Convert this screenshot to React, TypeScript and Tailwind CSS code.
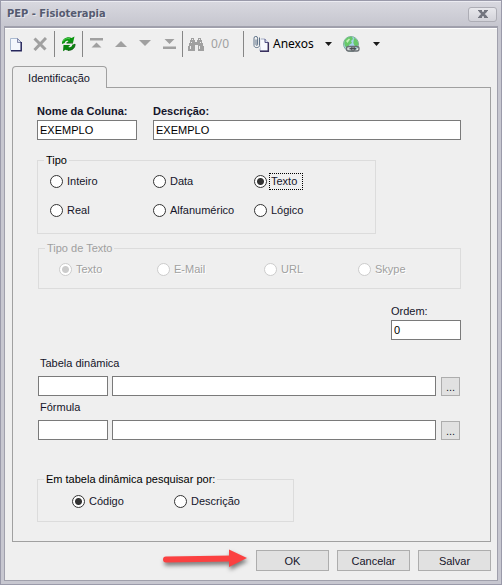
import type { ReactNode } from "react"

const fieldClass =
  "block h-5 w-full min-w-0 border border-[#7a7a7a] bg-white px-[2px] text-[11px] text-black outline-none"

const buttonClass = "border border-[#adadad] bg-[#e1e1e1] text-center text-[11px] text-[#15152a]"

const toolbarIcons = {
  page: (
    <svg width="13" height="15" viewBox="0 0 13 15">
      <path d="M1 1.5h7l3.5 3.5v8.5H1z" fill="#f3f7fd" />
      <path d="M.5 13.5v-12h7" fill="none" stroke="#a9b9d0" />
      <path d="M7.5 1.5v4h4z" fill="#d5deee" stroke="#6a7098" strokeWidth=".8" />
      <path d="M11.2 5v8.7H1" fill="none" stroke="#26265c" strokeWidth="1.5" />
    </svg>
  ),
  remove: (
    <svg width="14" height="14" viewBox="0 0 14 14">
      <path d="M1.5 1.5l11 11M13 1L1.500 13" fill="none" stroke="#a0a0a0" strokeWidth="3" />
    </svg>
  ),
  refresh: (
    <svg width="15" height="16" viewBox="0 0 15 16">
      <path d="M1 8C.8 3.500 4 1.200 8 1.200c1 0 1.700.2 2.500.8L13.500.5 12 6.800 5.500 7 7.500 5C5.500 4 3.800 5.200 3.800 7z" fill="#0a960f" />
      <path d="M14 7.800c.2 4.500-3 6.700-7 6.700-1 0-1.700-.2-2.500-.8L2 15.200 2.500 9h6.800L7.300 11c2 1 3.900-.2 3.900-2.200z" fill="#0a840f" />
      <path d="M2 5.500C3 3 6 2 9 2.800" fill="none" stroke="#4fd052" />
      <path d="M5.500 7H12M14 8c.2 4.200-3 6.400-7 6.400" fill="none" stroke="#07500a" strokeWidth=".9" />
    </svg>
  ),
  first: (
    <svg width="13" height="12" viewBox="0 0 13 12">
      <path d="M0 0h13v2.500H0zM6.500 4.500l5 5h-10z" fill="#a0a0a0" />
    </svg>
  ),
  previous: (
    <svg width="12" height="12" viewBox="0 0 12 12">
      <path d="M6 3l6 6H0z" fill="#a0a0a0" />
    </svg>
  ),
  next: (
    <svg width="12" height="12" viewBox="0 0 12 12">
      <path d="M0 2h12L6 8z" fill="#a0a0a0" />
    </svg>
  ),
  last: (
    <svg width="13" height="12" viewBox="0 0 13 12">
      <path d="M1.500 1h10l-5 5zM0 8.500h13V11H0z" fill="#a0a0a0" />
    </svg>
  ),
  search: (
    <svg width="16" height="14" viewBox="0 0 16 14">
      <path d="M3 1h3v2h1v2h2V3h1V1h3v2h1v3h1v3h1v5h-6V8H7v6H0V9h1V6h1V3h1z" fill="#a0a0a0" />
      <path d="M4 2h1v1H4zM11 2h1v1h-1zM3 5h1v1H3zM12 5h1v1h-1zM2 9h1v3H2zM11 9h1v3h-1z" fill="#ededed" />
    </svg>
  ),
  attachments: (
    <svg width="17" height="16" viewBox="0 0 17 16">
      <path d="M7 3h5l3.500 3.500V15H7z" fill="#f7f9fe" stroke="#a3acc4" />
      <path d="M12 3v3.500h3.500" fill="#d4dbec" stroke="#545384" />
      <path d="M15.300 6.500v8.700H7" fill="none" stroke="#39305e" strokeWidth="1.500" />
      <path d="M6.500 1.500v8c0 3.200-5.500 3.200-5.500 0V2a1.700 1.700 0 0 1 3.600 0V9" fill="none" stroke="#f3f3f3" strokeWidth="2.500" />
      <path d="M6.500 1.500v8c0 2.800-5.500 2.800-5.500 0V2.200a1.700 1.700 0 0 1 3.600 0V8.500a.8.8 0 0 1-1.600 0V3.500" fill="none" stroke="#5d7187" />
    </svg>
  ),
  globe: (
    <svg width="17" height="17" viewBox="0 0 17 17">
      <circle cx="8" cy="8" r="7.500" fill="#a5d3ec" stroke="#82b09c" />
      <path d="M2 4c2-3 5-3.500 7-3l1 2-2 2 1 2-3 2-1 4C1.500 11 .5 7 2 4zM11 2c3 1 4.500 4 4.300 7l-3 2-2-4z" fill="#68c96a" />
      <path d="M3 5l3-2.500 1 1L4.500 7z" fill="#c2f0b6" />
      <rect x="3.500" y="10.500" width="8" height="4.500" rx="2" fill="#d5d8db" stroke="#6b7075" strokeWidth="1.300" />
      <rect x="8.500" y="10.500" width="7.500" height="4.500" rx="2" fill="none" stroke="#6b7075" strokeWidth="1.300" />
      <path d="M6.500 12.700h6.500" stroke="#45494d" strokeWidth="1.300" />
    </svg>
  ),
  caret: (
    <svg width="7" height="4" viewBox="0 0 7 4">
      <path d="M0 0h7L3.500 4z" fill="#1a1a1a" />
    </svg>
  ),
}

function ToolButton({ label, className, children }: { label: string; className: string; children: ReactNode }) {
  return (
    <button type="button" aria-label={label} className={`flex shrink-0 items-center ${className}`}>
      {children}
    </button>
  )
}

function Separator() {
  return <div className="h-[26px] w-px shrink-0 bg-[#868686]" />
}

function Toolbar() {
  return (
    <div className="flex h-7 items-center pt-[2px] pl-[5px] font-['Noto_Sans',sans-serif] text-[12px]">
      <ToolButton label="Novo" className="w-[23px]">{toolbarIcons.page}</ToolButton>
      <ToolButton label="Excluir" className="w-[21px]">{toolbarIcons.remove}</ToolButton>
      <Separator />
      <ToolButton label="Atualizar" className="w-[27px] pl-[6px]">{toolbarIcons.refresh}</ToolButton>
      <Separator />
      <ToolButton label="Primeiro" className="w-8 pl-[7px]">{toolbarIcons.first}</ToolButton>
      <ToolButton label="Anterior" className="w-6">{toolbarIcons.previous}</ToolButton>
      <ToolButton label="Próximo" className="w-6">{toolbarIcons.next}</ToolButton>
      <ToolButton label="Último" className="w-[19px]">{toolbarIcons.last}</ToolButton>
      <Separator />
      <ToolButton label="Localizar" className="w-7 pl-[5px]">{toolbarIcons.search}</ToolButton>
      <span className="w-8 shrink-0 text-[#a0a0a0]">0/0</span>
      <Separator />
      <button type="button" className="flex shrink-0 items-center gap-[3px] pl-[9px] text-black">
        {toolbarIcons.attachments}
        Anexos
      </button>
      <ToolButton label="Opções de anexos" className="w-[29px] pl-[11px]">{toolbarIcons.caret}</ToolButton>
      <ToolButton label="Web" className="w-[30px]">{toolbarIcons.globe}</ToolButton>
      <ToolButton label="Opções da web" className="w-[9px]">{toolbarIcons.caret}</ToolButton>
    </div>
  )
}

type RadioProps = { name: string; label: string; checked?: boolean; disabled?: boolean; focused?: boolean }

function Radio({ name, label, checked, disabled, focused }: RadioProps) {
  return (
    <label className="flex h-[17px] items-center gap-[2px] whitespace-nowrap">
      <input
        type="radio"
        name={name}
        defaultChecked={checked}
        disabled={disabled}
        className="size-[13px] shrink-0 appearance-none rounded-full border border-[#333] bg-white text-[#333] checked:bg-[radial-gradient(circle,currentColor_3px,transparent_4px)] disabled:border-[#ccc] disabled:text-[#ccc]"
      />
      <span
        className={`border pl-px leading-[15px] ${focused ? "border-dotted border-black pr-[5px]" : "border-transparent pr-px"} ${
          disabled ? "text-[#a0a0a0] [text-shadow:1px_1px_0_#fff]" : ""
        }`}
      >
        {label}
      </span>
    </label>
  )
}

type GroupProps = { title: string; className: string; disabled?: boolean; children: ReactNode }

function Group({ title, className, disabled, children }: GroupProps) {
  return (
    <fieldset disabled={disabled} className={`min-w-0 border border-[#dcdcdc] ${className}`}>
      <legend className={`ml-[6px] px-[2px] leading-[14px] ${disabled ? "text-[#a0a0a0]" : "text-black"}`}>{title}</legend>
      {children}
    </fieldset>
  )
}

function LookupField({ id, label }: { id: string; label: string }) {
  return (
    <div className="pl-px">
      <label htmlFor={id} className="mb-[6px] block pl-[2px]">
        {label}
      </label>
      <div className="flex items-end">
        <div className="w-[70px] shrink-0">
          <input id={id} className={fieldClass} />
        </div>
        <div className="ml-1 flex-1">
          <input aria-label={label} className={fieldClass} />
        </div>
        <button type="button" className={`mr-px ml-[5px] h-[19px] w-[19px] ${buttonClass}`}>
          ...
        </button>
      </div>
    </div>
  )
}

export default function App() {
  return (
    <div className="flex min-h-screen flex-col border border-[#9a9aaa] bg-[#c7c7d0] font-['Liberation_Sans',Arial,sans-serif] text-[11px] leading-[14px] text-[#15152a]">
      <header className="flex h-[25px] shrink-0 items-center justify-between border-t border-[#ececf2] bg-linear-to-b from-[#d8d8df] to-[#c6c6cf] pr-1 pl-[6px]">
        <h1 className="font-['DejaVu_Sans_Condensed','Noto_Sans',sans-serif] text-[11px] font-bold text-[#555b70] [text-shadow:1px_1px_0_#e6e6ec]">
          PEP - Fisioterapia
        </h1>
        <button
          type="button"
          aria-label="Fechar"
          className="flex h-[15px] w-[29px] items-center justify-center rounded-[3px] border border-[#adadb5] bg-linear-to-b from-[#e8e8ec] to-[#d2d2d9]"
        >
          <svg width="10" height="8" viewBox="0 0 10 8">
            <path d="M0 .500h4M6 .500h4M0 7.500h4M6 7.500h4" stroke="#73757f" />
            <path d="M1.500 .500l7 7M8.500 .500l-7 7" stroke="#73757f" strokeWidth="2.500" />
          </svg>
        </button>
      </header>

      <main className="mx-[3px] mb-[3px] flex-1 border border-t-2 border-[#a0a0ac] bg-[#efefef]">
        <div className="border-t border-white">
          <Toolbar />
        </div>

        <div className="mt-[9px] mr-[6px] ml-[7px]">
          <div role="tablist" className="-mb-px flex">
            <button
              type="button"
              role="tab"
              aria-selected="true"
              className="relative h-[22px] w-[95px] rounded-t-[4px] border border-b-0 border-[#a0a0a0] bg-[#efefef] pr-px"
            >
              Identificação
            </button>
          </div>

          <form role="tabpanel" className="border border-[#a0a0a0] pt-4 pr-[29px] pb-[19px] pl-6">
            <div className="flex gap-4">
              <div className="w-[100px] shrink-0">
                <label htmlFor="nome" className="mb-[2px] block font-bold">
                  Nome da Coluna:
                </label>
                <input id="nome" defaultValue="EXEMPLO" className={fieldClass} />
              </div>
              <div className="flex-1">
                <label htmlFor="descricao" className="mb-[2px] block font-bold">
                  Descrição:
                </label>
                <input id="descricao" defaultValue="EXEMPLO" className={fieldClass} />
              </div>
            </div>

            <Group title="Tipo" className="mt-[13px] max-w-[339px]">
              <div className="grid grid-cols-[103px_101px_1fr] gap-y-3 pt-[6px] pb-[14px] pl-3">
                <Radio name="tipo" label="Inteiro" />
                <Radio name="tipo" label="Data" />
                <Radio name="tipo" label="Texto" checked focused />
                <Radio name="tipo" label="Real" />
                <Radio name="tipo" label="Alfanumérico" />
                <Radio name="tipo" label="Lógico" />
              </div>
            </Group>

            <Group title="Tipo de Texto" disabled className="mt-[7px] ml-px">
              <div className="grid grid-cols-[98fr_107fr_94fr_90fr] pt-[6px] pr-3 pb-[10px] pl-5">
                <Radio name="tipo-texto" label="Texto" checked disabled />
                <Radio name="tipo-texto" label="E-Mail" disabled />
                <Radio name="tipo-texto" label="URL" disabled />
                <Radio name="tipo-texto" label="Skype" disabled />
              </div>
            </Group>

            <div className="mt-[15px] ml-auto w-[70px]">
              <label htmlFor="ordem" className="mb-[2px] block">
                Ordem:
              </label>
              <input id="ordem" defaultValue="0" className={fieldClass} />
            </div>

            <div className="mt-4 flex flex-col gap-1">
              <LookupField id="tabela" label="Tabela dinâmica" />
              <LookupField id="formula" label="Fórmula" />
            </div>

            <Group title="Em tabela dinâmica pesquisar por:" className="mt-8 max-w-[257px]">
              <div className="grid grid-cols-[102px_1fr] pt-[7px] pb-[11px] pl-[34px]">
                <Radio name="pesquisa" label="Código" checked />
                <Radio name="pesquisa" label="Descrição" />
              </div>
            </Group>
          </form>

          <footer className="mt-[6px] mb-[7px] flex items-center justify-end gap-2">
            <svg width="88" height="25" viewBox="0 0 88 25" className="overflow-visible">
              <g className="drop-shadow-[1px_3px_2px_rgba(0,0,0,0.5)]">
                <path d="M6 11.500L72 10.500" stroke="#fb4141" strokeWidth="6" strokeLinecap="round" />
                <path d="M69 1.500L87 10 69 19z" fill="#fb4141" />
              </g>
            </svg>
            <button type="button" className={`h-[21px] w-[73px] ${buttonClass}`}>OK</button>
            <button type="button" className={`h-[21px] w-[73px] ${buttonClass}`}>Cancelar</button>
            <button type="button" className={`h-[21px] w-[73px] ${buttonClass}`}>Salvar</button>
          </footer>
        </div>
      </main>
    </div>
  )
}
